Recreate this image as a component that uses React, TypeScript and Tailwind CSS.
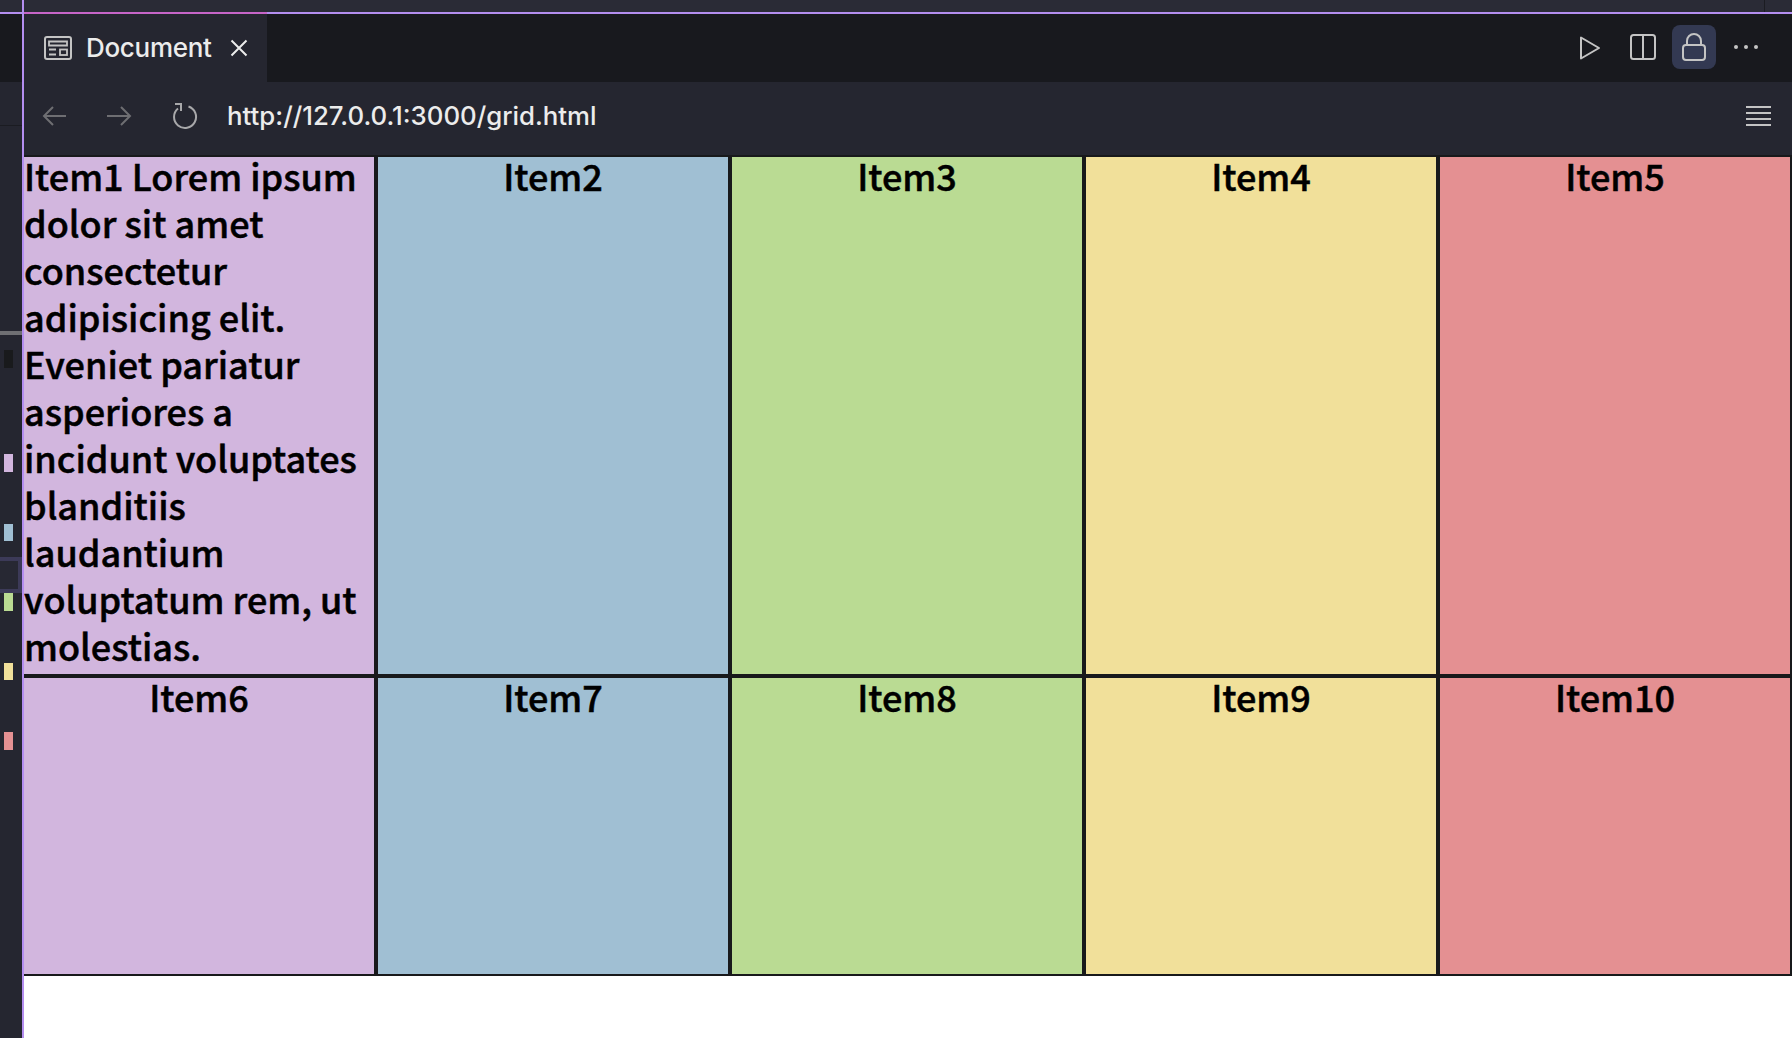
import { ReactNode } from "react";

const items = [
  { label: "Item1 Lorem ipsum dolor sit amet consectetur adipisicing elit. Eveniet pariatur asperiores a incidunt voluptates blanditiis laudantium voluptatum rem, ut molestias.", color: "bg-[#d2b6de]", left: true },
  { label: "Item2", color: "bg-[#a0bfd3]" },
  { label: "Item3", color: "bg-[#badb93]" },
  { label: "Item4", color: "bg-[#f1e09a]" },
  { label: "Item5", color: "bg-[#e49092]" },
  { label: "Item6", color: "bg-[#d2b6de]" },
  { label: "Item7", color: "bg-[#a0bfd3]" },
  { label: "Item8", color: "bg-[#badb93]" },
  { label: "Item9", color: "bg-[#f1e09a]" },
  { label: "Item10", color: "bg-[#e49092]" },
];

function Icon({ w, h, children, className }: { w: number; h: number; children: ReactNode; className?: string }) {
  return (
    <svg width={w} height={h} viewBox={`0 0 ${w} ${h}`} fill="none" stroke="currentColor" strokeWidth="2" className={className}>
      {children}
    </svg>
  );
}

function Gutter() {
  return (
    <div className="w-[22px] shrink-0 flex flex-col bg-[#252630]">
      <div className="h-[68px] bg-[#18191e]" />
      <div className="h-[44px] border-b border-[#1b1c22]" />
      <div className="mt-[205px] h-[4px] bg-[#6f6f73]" />
      <div className="mt-[15px] ml-[4px] w-[9px] h-[18px] bg-[#191a1c]" />
      <div className="mt-[86px] ml-[4px] w-[9px] h-[18px] bg-[#d2b6de]" />
      <div className="mt-[52px] ml-[4px] w-[9px] h-[17px] bg-[#a0bfd3]" />
      <div className="mt-[16px] h-[36px] border-4 border-l-0 border-[#3c3a58] bg-[#272833]" />
      <div className="ml-[4px] w-[9px] h-[18px] bg-[#badb93]" />
      <div className="mt-[52px] ml-[4px] w-[9px] h-[17px] bg-[#f1e09a]" />
      <div className="mt-[52px] ml-[4px] w-[9px] h-[18px] bg-[#e49092]" />
    </div>
  );
}

function TabBar() {
  return (
    <div className="h-[68px] shrink-0 flex items-stretch bg-[#18191e] text-[#c4c4c4]">
      <div className="w-[245px] flex items-center bg-[#252630] pl-[22px]">
        <Icon w={28} h={24}>
          <rect x="1" y="1" width="26" height="22" rx="2" />
          <path d="M5 5.500h18v4H5zM5 13.500h7M5 18.500h7" strokeWidth="1.800" />
          <rect x="16" y="13.500" width="7" height="5.500" strokeWidth="1.800" />
        </Icon>
        <span className="ml-[14px] -mt-[1px] text-[26px] font-medium text-[#ececec] font-['Inter',sans-serif] tracking-[-0.3px]">Document</span>
        <Icon w={18} h={18} className="ml-[18px] -mt-[1px] text-[#ececec]">
          <path d="M1.500 1.500l15 15M16.500 1.500l-15 15" />
        </Icon>
      </div>
      <div className="flex-1 flex items-center justify-end pr-[34px]">
        <Icon w={22} h={26}>
          <path d="M2 2.500v21l18-10.500z" strokeLinejoin="round" />
        </Icon>
        <Icon w={26} h={26} className="ml-[29px] -mt-[3px]">
          <rect x="1" y="1" width="24" height="24" rx="2.500" />
          <path d="M13 1v24" />
        </Icon>
        <div className="ml-[16px] -mt-[2px] w-[44px] h-[44px] rounded-[8px] bg-[#333952] flex items-center justify-center">
          <Icon w={24} h={28}>
            <rect x="1" y="12" width="22" height="15" rx="3" />
            <path d="M5 12V8a7 7 0 0 1 14 0v4" />
          </Icon>
        </div>
        <div className="ml-[18px] -mt-[2px] flex gap-[6px]">
          <div className="w-[4px] h-[4px] rounded-full bg-[#c4c4c4]" />
          <div className="w-[4px] h-[4px] rounded-full bg-[#c4c4c4]" />
          <div className="w-[4px] h-[4px] rounded-full bg-[#c4c4c4]" />
        </div>
      </div>
    </div>
  );
}

function UrlBar() {
  return (
    <div className="h-[73px] shrink-0 flex items-center bg-[#252630] pl-[20px] pr-[21px] pb-[6px]">
      <Icon w={24} h={22} className="text-[#6e6e72]">
        <path d="M24 11H2M11 2l-9 9 9 9" />
      </Icon>
      <Icon w={25} h={22} className="ml-[41px] text-[#6e6e72]">
        <path d="M0 11h23M14 2l9 9-9 9" />
      </Icon>
      <Icon w={26} h={28} className="ml-[40px] text-[#a8a8aa]">
        <path d="M3 2h6v7" />
        <path d="M16.500 4.500A11 11 0 1 1 6 6.500" />
      </Icon>
      <span className="ml-[29px] mt-[2px] text-[25.800px] font-medium text-[#ececec] font-['Inter',sans-serif]">http://127.0.0.1:3000/grid.html</span>
      <div className="ml-auto w-[25px] flex flex-col gap-[4px]">
        <div className="h-[2px] bg-[#c4c4c4]" />
        <div className="h-[2px] bg-[#c4c4c4]" />
        <div className="h-[2px] bg-[#c4c4c4]" />
        <div className="h-[2px] bg-[#c4c4c4]" />
      </div>
    </div>
  );
}

export default function App() {
  return (
    <div className="relative w-[1792px] h-[1038px] overflow-hidden bg-white flex flex-col">
      <div className="h-[12px] shrink-0 bg-[#2a2b36] flex justify-end pr-[27px]">
        <div className="w-[1px] bg-[#1b1c22]" />
      </div>
      <div className="h-[2px] shrink-0 bg-[#b48ef0]" />
      <div className="flex-1 flex">
        <Gutter />
        <div className="flex-1 flex flex-col min-w-0">
          <TabBar />
          <UrlBar />
          <div className="grid grid-cols-5 grid-rows-[521px_300px] font-['Noto_Sans_CJK_KR',sans-serif] font-medium text-[36px] leading-[47px] text-black [-webkit-text-stroke:0.5px_black]">
            {items.map((item) => (
              <div key={item.label} className={`border-2 border-[#18191b] ${item.color} ${item.left ? "text-left" : "text-center"}`}>
                <div className="-mt-[5px]">{item.label}</div>
              </div>
            ))}
          </div>
        </div>
      </div>
      {/* guide lines drawn over the page */}
      <div className="absolute left-[22px] top-0 bottom-0 w-[2px] bg-[#b48ef0]" />
      <div className="absolute left-[24px] top-[12px] w-[243px] h-[2px] bg-[#c765c8]" />
    </div>
  );
}
